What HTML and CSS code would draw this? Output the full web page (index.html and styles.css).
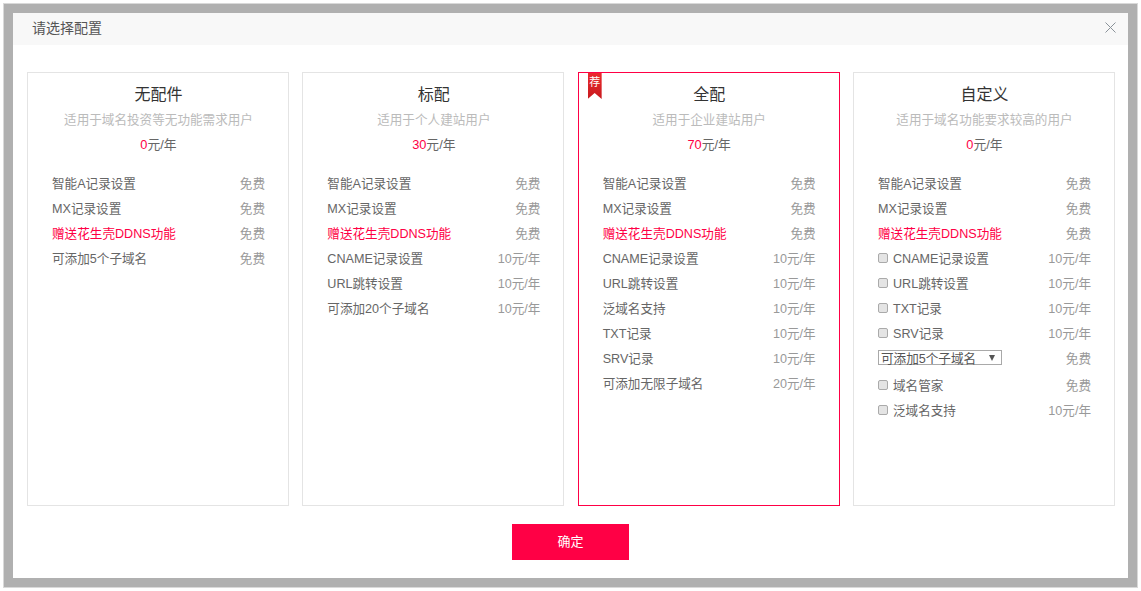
FILE: index.html
```html
<!DOCTYPE html>
<html lang="zh-CN">
<head>
    <meta charset="UTF-8">
    <title>请选择配置</title>
    <link rel="stylesheet" href="styles.css">
</head>
<body>
    <div class="frame">
        <div class="modal">
            <div class="modal-header">
                <span class="modal-title">请选择配置</span>
                <svg class="close" width="11" height="11" viewBox="0 0 11 11"><path d="M.5.5l10 10M10.5.5l-10 10" stroke="#8a9299" stroke-width="1" fill="none"/></svg>
            </div>
            <div class="cards">
                <div class="card">
                    <div class="card-title">无配件</div>
                    <div class="card-desc">适用于域名投资等无功能需求用户</div>
                    <div class="card-price"><em>0</em>元/年</div>
                    <div class="row"><span>智能A记录设置</span><span class="fee">免费</span></div>
                    <div class="row"><span>MX记录设置</span><span class="fee">免费</span></div>
                    <div class="row"><span class="hot">赠送花生壳DDNS功能</span><span class="fee">免费</span></div>
                    <div class="row"><span>可添加5个子域名</span><span class="fee">免费</span></div>
                </div>
                <div class="card">
                    <div class="card-title">标配</div>
                    <div class="card-desc">适用于个人建站用户</div>
                    <div class="card-price"><em>30</em>元/年</div>
                    <div class="row"><span>智能A记录设置</span><span class="fee">免费</span></div>
                    <div class="row"><span>MX记录设置</span><span class="fee">免费</span></div>
                    <div class="row"><span class="hot">赠送花生壳DDNS功能</span><span class="fee">免费</span></div>
                    <div class="row"><span>CNAME记录设置</span><span class="fee">10元/年</span></div>
                    <div class="row"><span>URL跳转设置</span><span class="fee">10元/年</span></div>
                    <div class="row"><span>可添加20个子域名</span><span class="fee">10元/年</span></div>
                </div>
                <div class="card card-active">
                    <div class="ribbon"><span class="ribbon-text">荐</span></div>
                    <div class="card-title">全配</div>
                    <div class="card-desc">适用于企业建站用户</div>
                    <div class="card-price"><em>70</em>元/年</div>
                    <div class="row"><span>智能A记录设置</span><span class="fee">免费</span></div>
                    <div class="row"><span>MX记录设置</span><span class="fee">免费</span></div>
                    <div class="row"><span class="hot">赠送花生壳DDNS功能</span><span class="fee">免费</span></div>
                    <div class="row"><span>CNAME记录设置</span><span class="fee">10元/年</span></div>
                    <div class="row"><span>URL跳转设置</span><span class="fee">10元/年</span></div>
                    <div class="row"><span>泛域名支持</span><span class="fee">10元/年</span></div>
                    <div class="row"><span>TXT记录</span><span class="fee">10元/年</span></div>
                    <div class="row"><span>SRV记录</span><span class="fee">10元/年</span></div>
                    <div class="row"><span>可添加无限子域名</span><span class="fee">20元/年</span></div>
                </div>
                <div class="card">
                    <div class="card-title">自定义</div>
                    <div class="card-desc">适用于域名功能要求较高的用户</div>
                    <div class="card-price"><em>0</em>元/年</div>
                    <div class="row"><span>智能A记录设置</span><span class="fee">免费</span></div>
                    <div class="row"><span>MX记录设置</span><span class="fee">免费</span></div>
                    <div class="row"><span class="hot">赠送花生壳DDNS功能</span><span class="fee">免费</span></div>
                    <div class="row"><label class="check"><span class="box"></span>CNAME记录设置</label><span class="fee">10元/年</span></div>
                    <div class="row"><label class="check"><span class="box"></span>URL跳转设置</label><span class="fee">10元/年</span></div>
                    <div class="row"><label class="check"><span class="box"></span>TXT记录</label><span class="fee">10元/年</span></div>
                    <div class="row"><label class="check"><span class="box"></span>SRV记录</label><span class="fee">10元/年</span></div>
                    <div class="row row-select"><div class="select">可添加5个子域名<span class="arrow"></span></div><span class="fee">免费</span></div>
                    <div class="row"><label class="check"><span class="box"></span>域名管家</label><span class="fee">免费</span></div>
                    <div class="row"><label class="check"><span class="box"></span>泛域名支持</label><span class="fee">10元/年</span></div>
                </div>
            </div>
            <div class="actions">
                <button class="confirm">确定</button>
            </div>
        </div>
    </div>
</body>
</html>
```
FILE: styles.css
```css
html, body {
    margin: 0;
    height: 591px;
    overflow: hidden;
    background-color: #fff;
}
body {
    font-family: "Liberation Sans", "Noto Sans CJK SC", sans-serif;
    font-size: 12.6px;
    color: #666;
}
.frame {
    box-sizing: border-box;
    width: 1135px;
    height: 585px;
    margin: 3px 3px;
    border: 1px solid #d9d9d9;
    background-color: #b0b0b0;
    padding: 9px;
}
.modal {
    height: 565px;
    background-color: #fff;
}
.modal-header {
    display: flex;
    align-items: center;
    justify-content: space-between;
    height: 32px;
    padding: 0 12px 4px 19px;
    box-sizing: border-box;
    background-color: #f8f8f8;
}
.modal-title {
    font-size: 14px;
    color: #555;
}
.cards {
    display: grid;
    grid-template-columns: repeat(4, 262px);
    justify-content: space-between;
    margin: 27px 13px 0 14px;
}
.card {
    position: relative;
    box-sizing: border-box;
    height: 434px;
    border: 1px solid #e4e4e4;
    padding: 11px 23px 0 24px;
}
.card-active {
    border-color: #ff0045;
}
.card-title {
    font-size: 16px;
    line-height: 22px;
    color: #333;
    text-align: center;
}
.card-desc {
    margin-top: 4px;
    line-height: 20px;
    color: #bbb;
    text-align: center;
}
.card-price {
    margin-top: 5px;
    margin-bottom: 15px;
    line-height: 20px;
    font-size: 12.8px;
    text-align: center;
}
.card-price em {
    font-style: normal;
    color: #ff0045;
}
.row {
    display: flex;
    align-items: center;
    justify-content: space-between;
    height: 25px;
}
.row-select {
    margin-bottom: 2px;
}
.fee {
    color: #999;
}
.hot {
    color: #ff0045;
}
.check {
    display: flex;
    align-items: center;
}
.box {
    box-sizing: border-box;
    width: 10px;
    height: 10px;
    margin: 0 5px 0 0;
    border: 1px solid #aaa;
    border-radius: 2px;
    background-color: #e4e4e4;
}
.select {
    display: flex;
    align-items: center;
    justify-content: space-between;
    box-sizing: border-box;
    width: 124px;
    height: 15px;
    padding: 0 6px 0 2px;
    border: 1px solid #a9a9a9;
    color: #555;
}
.arrow {
    width: 0;
    height: 0;
    border-left: 3.5px solid transparent;
    border-right: 3.5px solid transparent;
    border-top: 6px solid #555;
}
.ribbon {
    position: absolute;
    top: 0;
    left: 9px;
    width: 14px;
    height: 26px;
    background: linear-gradient(#ea2a2e, #c81a1e);
    clip-path: polygon(0 0, 100% 0, 100% 100%, 50% 77%, 0 100%);
}
.ribbon-text {
    display: block;
    font-size: 11px;
    line-height: 18px;
    color: #fff;
    text-align: center;
}
.actions {
    display: flex;
    justify-content: center;
    margin-top: 18px;
}
.confirm {
    width: 117px;
    height: 36px;
    padding: 0 0 3px;
    border: none;
    background-color: #ff0045;
    color: #fff;
    font-family: inherit;
    font-size: 13px;
}
```
